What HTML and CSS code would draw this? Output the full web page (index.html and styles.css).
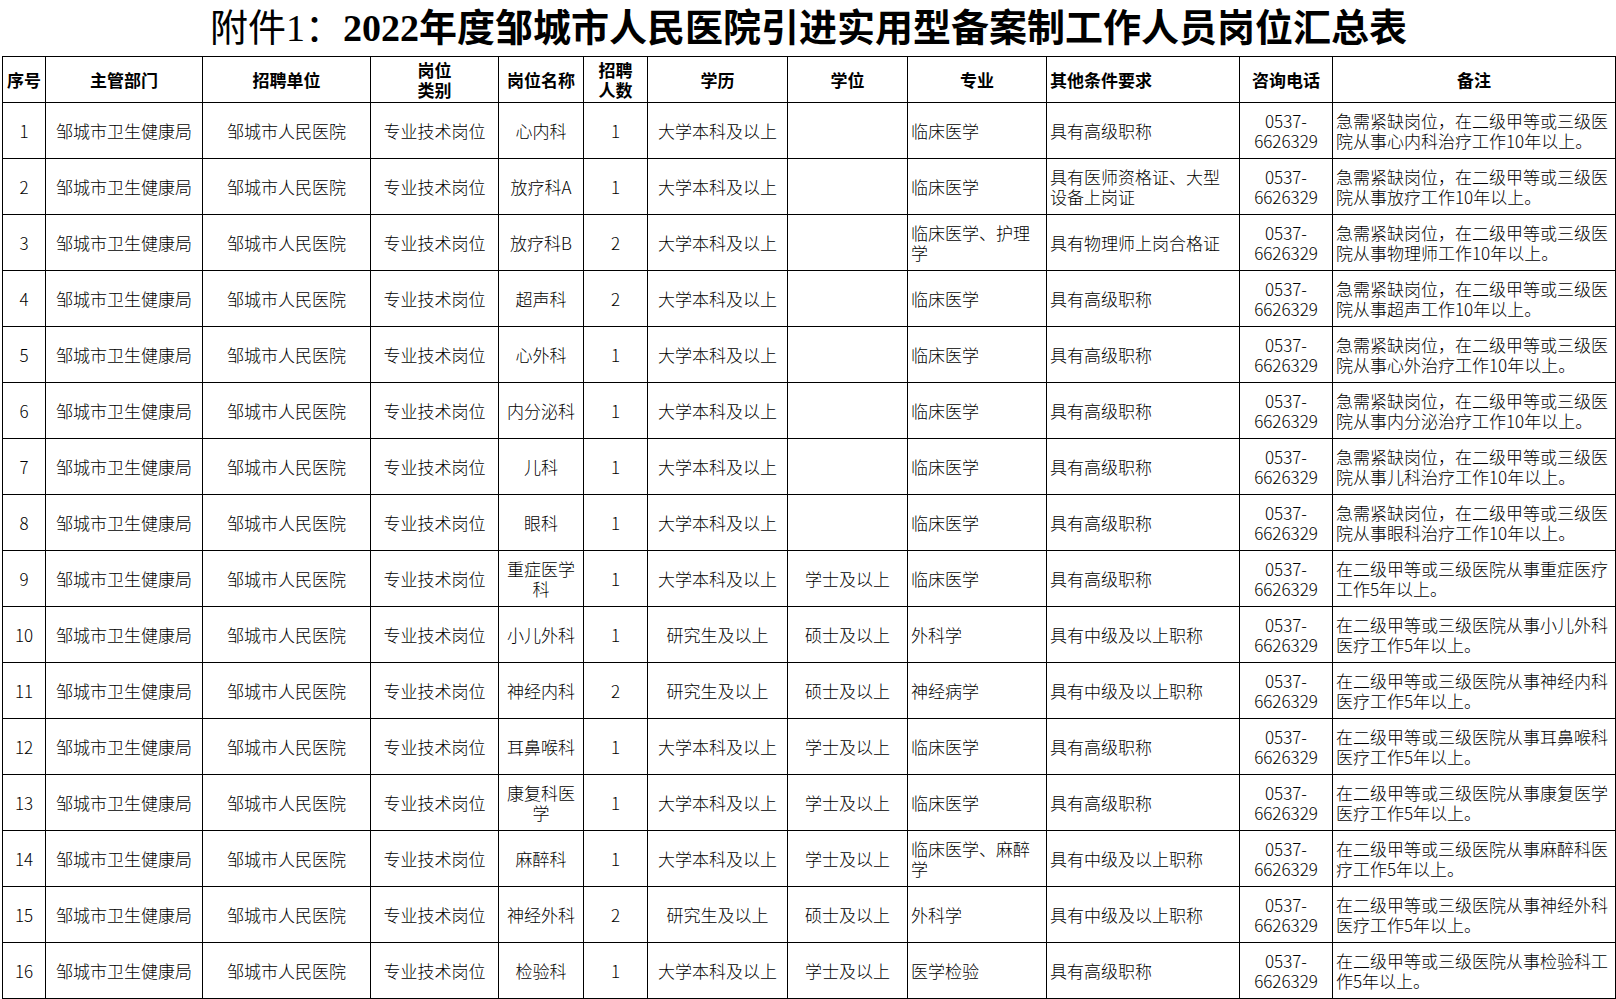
FILE: index.html
```html
<!DOCTYPE html>
<html lang="zh-CN">
<head>
<meta charset="utf-8">
<title>岗位汇总表</title>
<link rel="stylesheet" href="styles.css">
</head>
<body>
<div class="page">
  <h1 class="title"><span class="title-pre">附件1：</span><span class="title-main">2022年度邹城市人民医院引进实用型备案制工作人员岗位汇总表</span></h1>
  <table class="sheet">
    <colgroup>
      <col class="c-no"><col class="c-dept"><col class="c-unit"><col class="c-type"><col class="c-name"><col class="c-num"><col class="c-edu"><col class="c-deg"><col class="c-major"><col class="c-other"><col class="c-tel"><col class="c-note">
    </colgroup>
    <thead>
      <tr class="head">
        <th>序号</th><th>主管部门</th><th>招聘单位</th><th>岗位<br>类别</th><th>岗位名称</th><th>招聘<br>人数</th><th>学历</th><th>学位</th><th>专业</th><th class="left">其他条件要求</th><th>咨询电话</th><th>备注</th>
      </tr>
    </thead>
    <tbody>
      <tr><td>1</td><td>邹城市卫生健康局</td><td>邹城市人民医院</td><td>专业技术岗位</td><td>心内科</td><td>1</td><td>大学本科及以上</td><td></td><td class="left">临床医学</td><td class="left">具有高级职称</td><td>0537-<br>6626329</td><td class="left">急需紧缺岗位，在二级甲等或三级医<br>院从事心内科治疗工作10年以上。</td></tr>
      <tr><td>2</td><td>邹城市卫生健康局</td><td>邹城市人民医院</td><td>专业技术岗位</td><td>放疗科A</td><td>1</td><td>大学本科及以上</td><td></td><td class="left">临床医学</td><td class="left">具有医师资格证、大型<br>设备上岗证</td><td>0537-<br>6626329</td><td class="left">急需紧缺岗位，在二级甲等或三级医<br>院从事放疗工作10年以上。</td></tr>
      <tr><td>3</td><td>邹城市卫生健康局</td><td>邹城市人民医院</td><td>专业技术岗位</td><td>放疗科B</td><td>2</td><td>大学本科及以上</td><td></td><td class="left">临床医学、护理<br>学</td><td class="left">具有物理师上岗合格证</td><td>0537-<br>6626329</td><td class="left">急需紧缺岗位，在二级甲等或三级医<br>院从事物理师工作10年以上。</td></tr>
      <tr><td>4</td><td>邹城市卫生健康局</td><td>邹城市人民医院</td><td>专业技术岗位</td><td>超声科</td><td>2</td><td>大学本科及以上</td><td></td><td class="left">临床医学</td><td class="left">具有高级职称</td><td>0537-<br>6626329</td><td class="left">急需紧缺岗位，在二级甲等或三级医<br>院从事超声工作10年以上。</td></tr>
      <tr><td>5</td><td>邹城市卫生健康局</td><td>邹城市人民医院</td><td>专业技术岗位</td><td>心外科</td><td>1</td><td>大学本科及以上</td><td></td><td class="left">临床医学</td><td class="left">具有高级职称</td><td>0537-<br>6626329</td><td class="left">急需紧缺岗位，在二级甲等或三级医<br>院从事心外治疗工作10年以上。</td></tr>
      <tr><td>6</td><td>邹城市卫生健康局</td><td>邹城市人民医院</td><td>专业技术岗位</td><td>内分泌科</td><td>1</td><td>大学本科及以上</td><td></td><td class="left">临床医学</td><td class="left">具有高级职称</td><td>0537-<br>6626329</td><td class="left">急需紧缺岗位，在二级甲等或三级医<br>院从事内分泌治疗工作10年以上。</td></tr>
      <tr><td>7</td><td>邹城市卫生健康局</td><td>邹城市人民医院</td><td>专业技术岗位</td><td>儿科</td><td>1</td><td>大学本科及以上</td><td></td><td class="left">临床医学</td><td class="left">具有高级职称</td><td>0537-<br>6626329</td><td class="left">急需紧缺岗位，在二级甲等或三级医<br>院从事儿科治疗工作10年以上。</td></tr>
      <tr><td>8</td><td>邹城市卫生健康局</td><td>邹城市人民医院</td><td>专业技术岗位</td><td>眼科</td><td>1</td><td>大学本科及以上</td><td></td><td class="left">临床医学</td><td class="left">具有高级职称</td><td>0537-<br>6626329</td><td class="left">急需紧缺岗位，在二级甲等或三级医<br>院从事眼科治疗工作10年以上。</td></tr>
      <tr><td>9</td><td>邹城市卫生健康局</td><td>邹城市人民医院</td><td>专业技术岗位</td><td>重症医学<br>科</td><td>1</td><td>大学本科及以上</td><td>学士及以上</td><td class="left">临床医学</td><td class="left">具有高级职称</td><td>0537-<br>6626329</td><td class="left">在二级甲等或三级医院从事重症医疗<br>工作5年以上。</td></tr>
      <tr><td>10</td><td>邹城市卫生健康局</td><td>邹城市人民医院</td><td>专业技术岗位</td><td>小儿外科</td><td>1</td><td>研究生及以上</td><td>硕士及以上</td><td class="left">外科学</td><td class="left">具有中级及以上职称</td><td>0537-<br>6626329</td><td class="left">在二级甲等或三级医院从事小儿外科<br>医疗工作5年以上。</td></tr>
      <tr><td>11</td><td>邹城市卫生健康局</td><td>邹城市人民医院</td><td>专业技术岗位</td><td>神经内科</td><td>2</td><td>研究生及以上</td><td>硕士及以上</td><td class="left">神经病学</td><td class="left">具有中级及以上职称</td><td>0537-<br>6626329</td><td class="left">在二级甲等或三级医院从事神经内科<br>医疗工作5年以上。</td></tr>
      <tr><td>12</td><td>邹城市卫生健康局</td><td>邹城市人民医院</td><td>专业技术岗位</td><td>耳鼻喉科</td><td>1</td><td>大学本科及以上</td><td>学士及以上</td><td class="left">临床医学</td><td class="left">具有高级职称</td><td>0537-<br>6626329</td><td class="left">在二级甲等或三级医院从事耳鼻喉科<br>医疗工作5年以上。</td></tr>
      <tr><td>13</td><td>邹城市卫生健康局</td><td>邹城市人民医院</td><td>专业技术岗位</td><td>康复科医<br>学</td><td>1</td><td>大学本科及以上</td><td>学士及以上</td><td class="left">临床医学</td><td class="left">具有高级职称</td><td>0537-<br>6626329</td><td class="left">在二级甲等或三级医院从事康复医学<br>医疗工作5年以上。</td></tr>
      <tr><td>14</td><td>邹城市卫生健康局</td><td>邹城市人民医院</td><td>专业技术岗位</td><td>麻醉科</td><td>1</td><td>大学本科及以上</td><td>学士及以上</td><td class="left">临床医学、麻醉<br>学</td><td class="left">具有中级及以上职称</td><td>0537-<br>6626329</td><td class="left">在二级甲等或三级医院从事麻醉科医<br>疗工作5年以上。</td></tr>
      <tr><td>15</td><td>邹城市卫生健康局</td><td>邹城市人民医院</td><td>专业技术岗位</td><td>神经外科</td><td>2</td><td>研究生及以上</td><td>硕士及以上</td><td class="left">外科学</td><td class="left">具有中级及以上职称</td><td>0537-<br>6626329</td><td class="left">在二级甲等或三级医院从事神经外科<br>医疗工作5年以上。</td></tr>
      <tr><td>16</td><td>邹城市卫生健康局</td><td>邹城市人民医院</td><td>专业技术岗位</td><td>检验科</td><td>1</td><td>大学本科及以上</td><td>学士及以上</td><td class="left">医学检验</td><td class="left">具有高级职称</td><td>0537-<br>6626329</td><td class="left">在二级甲等或三级医院从事检验科工<br>作5年以上。</td></tr>
    </tbody>
  </table>
</div>
</body>
</html>
```

FILE: styles.css
```css
html, body {
  margin: 0;
  padding: 0;
  background: #ffffff;
}

body {
  color: #000000;
  font-family: "Noto Sans CJK SC", sans-serif;
}

.page {
  width: 1616px;
  padding-left: 2px;
  box-sizing: border-box;
}

.title {
  margin: 0;
  height: 56px;
  width: 1613px;
  display: flex;
  align-items: center;
  justify-content: center;
  font-family: "Liberation Serif", "Noto Sans CJK SC", serif;
  font-size: 38px;
  line-height: 1;
  color: #000000;
  white-space: nowrap;
}

.title-pre {
  font-weight: 400;
}

.title-main {
  font-weight: 700;
}

.sheet {
  border-collapse: collapse;
  table-layout: fixed;
  width: 1613px;
  font-size: 17px;
  line-height: 20px;
}

.sheet th,
.sheet td {
  border: 1px solid #000000;
  padding: 0 3px;
  text-align: center;
  vertical-align: middle;
  white-space: nowrap;
  overflow: hidden;
}

.sheet td {
  font-weight: 300;
}

.sheet th {
  font-weight: 700;
  line-height: 20px;
}

.sheet .left {
  text-align: left;
}

.head {
  height: 46px;
}

.sheet tbody tr {
  height: 56px;
}

.c-no { width: 43px; }
.c-dept { width: 157px; }
.c-unit { width: 168px; }
.c-type { width: 128px; }
.c-name { width: 85px; }
.c-num { width: 64px; }
.c-edu { width: 140px; }
.c-deg { width: 120px; }
.c-major { width: 139px; }
.c-other { width: 193px; }
.c-tel { width: 93px; }
.c-note { width: 283px; }
```
